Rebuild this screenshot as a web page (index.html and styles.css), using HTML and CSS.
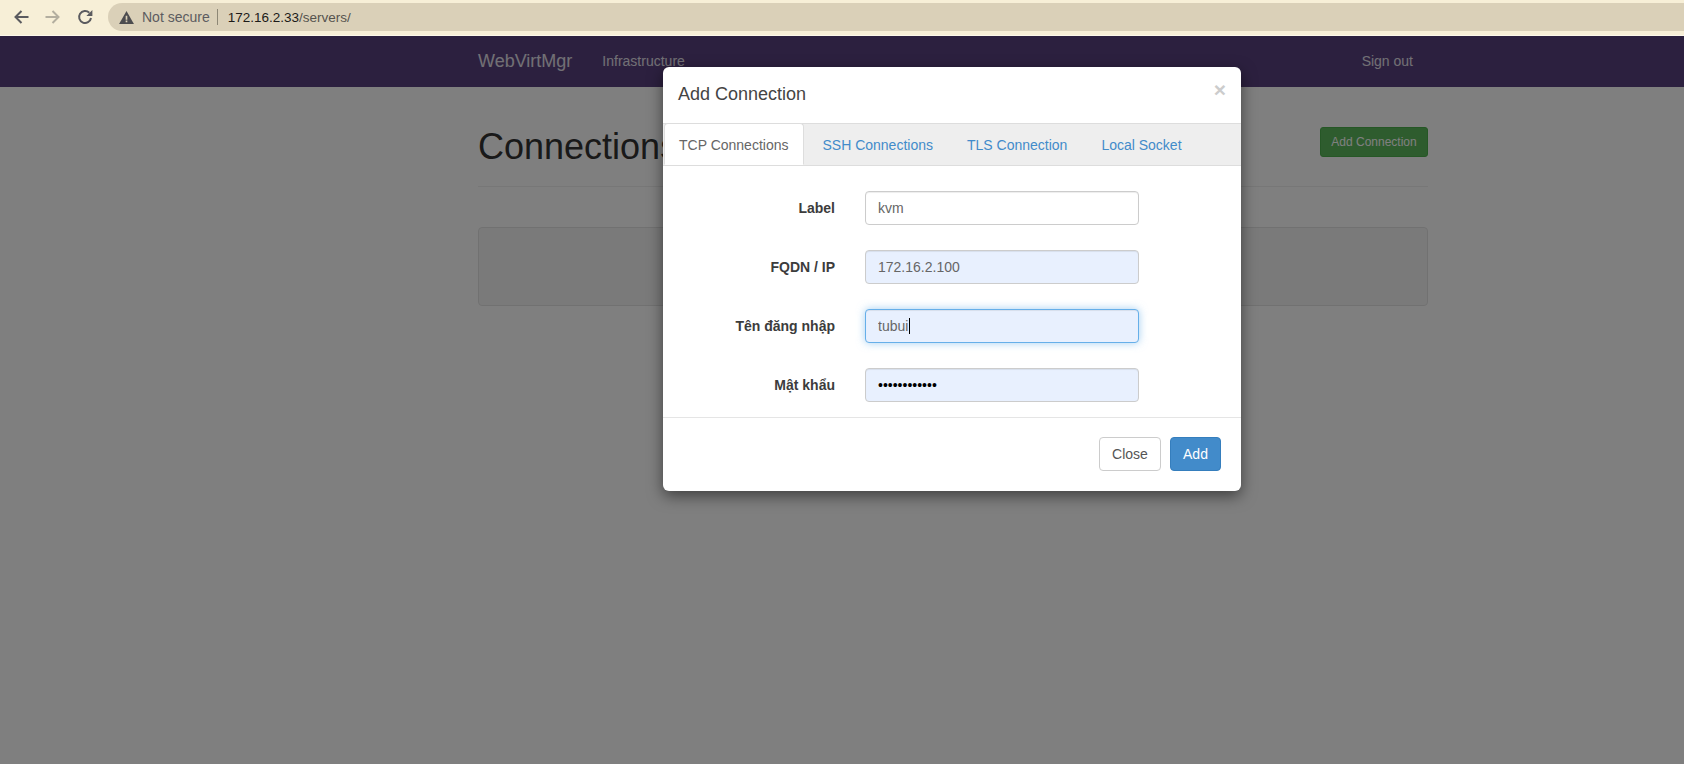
FILE: index.html
```html
<!DOCTYPE html>
<html lang="en">
<head>
    <meta charset="UTF-8">
    <title>WebVirtMgr</title>
    <link rel="stylesheet" href="styles.css">
</head>
<body>
    <div class="browser-bar">
        <svg class="tool-icon" viewBox="0 0 16 16"><path d="M15.500 8H3M8.500 2 2.500 8l6 6" fill="none" stroke="#5b5b5f" stroke-width="2"/></svg>
        <svg class="tool-icon" viewBox="0 0 16 16"><path d="M.5 8H13M7.500 2l6 6-6 6" fill="none" stroke="#b3ae9f" stroke-width="2"/></svg>
        <svg class="tool-icon" viewBox="0 0 16 16"><path d="M14 9A6 6 0 1 1 12.300 3.700" fill="none" stroke="#5b5b5f" stroke-width="2"/><path d="M9.400 7h6V1z" fill="#5b5b5f"/></svg>
        <div class="omnibox">
            <svg class="warn-icon" viewBox="0 0 16 14"><path d="M8 0 16 14H0z" fill="#4c4c4f"/><path d="M7.100 5h1.800v4.500H7.100zM7.100 10.300h1.800v1.800H7.100z" fill="#dad0b8"/></svg>
            <span class="secure-text">Not secure</span>
            <span class="url"><span class="host">172.16.2.33</span>/servers/</span>
        </div>
    </div>

    <div class="page">
        <div class="navbar">
            <div class="navbar-inner">
                <a class="brand">WebVirtMgr</a>
                <a class="nav-link">Infrastructure</a>
                <a class="nav-link sign-out">Sign out</a>
            </div>
        </div>

        <div class="content">
            <div class="page-header">
                <h1>Connections</h1>
                <button class="btn-add-small">Add Connection</button>
            </div>
            <div class="well"></div>
        </div>

        <div class="backdrop"></div>

        <div class="modal">
            <div class="modal-header">
                <h4>Add Connection</h4>
                <span class="close">×</span>
            </div>
            <div class="tabs">
                <a class="tab active">TCP Connections</a>
                <a class="tab">SSH Connections</a>
                <a class="tab">TLS Connection</a>
                <a class="tab">Local Socket</a>
            </div>
            <form class="modal-body">
                <label class="field-label">Label</label>
                <input class="form-control" type="text" value="kvm">
                <label class="field-label">FQDN / IP</label>
                <input class="form-control autofill" type="text" value="172.16.2.100">
                <label class="field-label">Tên đăng nhập</label>
                <div class="focus-field">
                    <input class="form-control autofill focused" type="text" value="tubui">
                    <span class="caret"></span>
                </div>
                <label class="field-label">Mật khẩu</label>
                <input class="form-control autofill password" type="password" value="abcdefghijkl">
            </form>
            <div class="modal-footer">
                <button type="button" class="btn btn-default">Close</button>
                <button type="button" class="btn btn-primary">Add</button>
            </div>
        </div>
    </div>
</body>
</html>
```

FILE: styles.css
```css
* {
    box-sizing: border-box;
}

html, body {
    margin: 0;
    height: 100%;
    overflow: hidden;
}

body {
    background: #fff;
    font-family: "Liberation Sans", Arial, sans-serif;
    font-size: 14px;
    color: #333;
}

/* browser chrome */
.browser-bar {
    height: 36px;
    padding-left: 13px;
    background: #f7efd7;
    border-bottom: 1px solid #fdf8ea;
    display: flex;
    align-items: flex-start;
}

.tool-icon {
    width: 16px;
    height: 16px;
    margin-top: 9px;
    margin-right: 16px;
    flex-shrink: 0;
}

.omnibox {
    flex: 1;
    height: 28px;
    margin-top: 3px;
    margin-left: -1px;
    padding-left: 11px;
    background: #dad0b8;
    border-radius: 14px 0 0 14px;
    display: flex;
    align-items: center;
}

.warn-icon {
    width: 15px;
    height: 13px;
    margin-right: 8px;
}

.secure-text {
    color: #5c5c60;
    padding-right: 7px;
    border-right: 1px solid #8d8775;
    line-height: 16px;
}

.url {
    font-size: 13.500px;
    color: #55534e;
    margin-left: 10px;
}

.host {
    color: #1c1b19;
}

/* page under the modal */
.page {
    position: relative;
    height: 728px;
    overflow: hidden;
}

.navbar {
    height: 51px;
    background: #58407f;
}

.navbar-inner {
    width: 950px;
    height: 50px;
    margin-left: 478px;
    display: flex;
    align-items: center;
}

.brand {
    font-size: 18px;
    color: #e4e1ea;
    margin-right: 30px;
}

.nav-link {
    color: #e4e1ea;
}

.sign-out {
    margin-left: auto;
    margin-right: 15px;
}

.content {
    width: 950px;
    margin-left: 478px;
}

.page-header {
    height: 100px;
    padding-top: 40px;
    border-bottom: 1px solid #eee;
    display: flex;
    justify-content: space-between;
    align-items: flex-start;
}

h1 {
    margin: 0;
    font-size: 36px;
    font-weight: 500;
    line-height: 40px;
    color: #333;
}

.btn-add-small {
    width: 108px;
    height: 30px;
    background: #5cb85c;
    border: 1px solid #4cae4c;
    border-radius: 3px;
    color: #fff;
    font-family: inherit;
    font-size: 12px;
    padding: 0;
}

.well {
    height: 79px;
    margin-top: 40px;
    background: #f5f5f5;
    border: 1px solid #e3e3e3;
    border-radius: 4px;
}

.backdrop {
    position: absolute;
    inset: 0;
    background: rgba(0, 0, 0, 0.5);
}

/* modal */
.modal {
    position: absolute;
    left: 663px;
    top: 31px;
    width: 578px;
    height: 424px;
    background: #fff;
    border-radius: 6px;
    box-shadow: 0 5px 15px rgba(0, 0, 0, 0.5);
}

.modal-header {
    height: 56px;
    padding: 14px 15px;
    position: relative;
}

h4 {
    margin: 0;
    font-size: 18px;
    font-weight: 500;
    line-height: 26px;
    color: #444;
}

.close {
    position: absolute;
    right: 15px;
    top: 12px;
    font-size: 21px;
    font-weight: bold;
    line-height: 21px;
    color: #ccc;
}

.tabs {
    height: 43px;
    background: #eee;
    border-top: 1px solid #ddd;
    border-bottom: 1px solid #ddd;
    display: flex;
    gap: 2px;
    padding-left: 1px;
}

.tab {
    height: 42px;
    padding: 11px 15px 0;
    border: 1px solid transparent;
    color: #428bca;
    line-height: 20px;
    margin-top: -1px;
}

.tab.active {
    padding-left: 14px;
    background: #fff;
    color: #666;
    border-color: #ddd;
    border-bottom-color: #fff;
    border-radius: 4px 4px 0 0;
}

.modal-body {
    display: grid;
    grid-template-columns: 172px 274px;
    column-gap: 30px;
    row-gap: 25px;
    padding: 25px 0 15px;
    align-items: center;
}

.field-label {
    font-weight: bold;
    text-align: right;
    color: #3c3c3c;
}

.form-control {
    display: block;
    width: 100%;
    height: 34px;
    padding: 6px 12px;
    background: #fff;
    border: 1px solid #ccc;
    border-radius: 4px;
    font-family: inherit;
    font-size: 14px;
    color: #666;
    box-shadow: inset 0 1px 1px rgba(0, 0, 0, 0.075);
    outline: none;
}

.autofill {
    background: #e8f0fe;
}

.password {
    color: #000;
}

.focused {
    border-color: #66afe9;
    box-shadow: inset 0 1px 1px rgba(0, 0, 0, 0.075), 0 0 8px rgba(102, 175, 233, 0.6);
}

.focus-field {
    position: relative;
}

.caret {
    position: absolute;
    left: 44px;
    top: 9px;
    width: 1px;
    height: 16px;
    background: #000;
}

.modal-footer {
    height: 74px;
    padding: 19px 20px 0;
    border-top: 1px solid #e5e5e5;
    display: flex;
    justify-content: flex-end;
    gap: 9px;
}

.btn {
    height: 34px;
    padding: 0 12px;
    border: 1px solid #ccc;
    border-radius: 4px;
    font-family: inherit;
    font-size: 14px;
}

.btn-default {
    width: 62px;
    background: #fff;
    color: #555;
}

.btn-primary {
    width: 51px;
    background: #428bca;
    border-color: #357ebd;
    color: #fff;
}
```
